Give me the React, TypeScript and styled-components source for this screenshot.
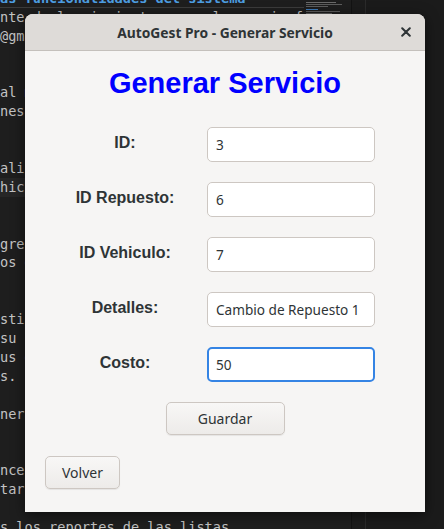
import React from "react";
import styled, { createGlobalStyle } from "styled-components";

const GlobalStyle = createGlobalStyle`
  html, body { margin: 0; padding: 0; background: #1e1e1e; overflow: hidden; }
  * { box-sizing: border-box; }
`;

const Desktop = styled.div`
  position: relative;
  width: 444px;
  height: 529px;
  overflow: hidden;
  display: flex;
  background: #1e1e1e;
`;

const CodePane = styled.div`
  width: 352px;
  display: flex;
  border-right: 1px solid #131313;
`;

const CodeText = styled.div`
  flex: 1;
  overflow: hidden;
  display: flex;
  flex-direction: column;
  margin-top: -11px;
  font-family: "DejaVu Sans Mono", "Liberation Mono", monospace;
  font-size: 13.6px;
  color: #c4c4c4;
`;

const CodeLine = styled.div<{ $heading?: boolean; $current?: boolean; $rule?: boolean }>`
  flex: none;
  height: 18.9px;
  line-height: 18.9px;
  white-space: pre;
  color: ${(p) => (p.$heading ? "#4d9de0" : "#c4c4c4")};
  font-weight: ${(p) => (p.$heading ? "bold" : "normal")};
  background: ${(p) => (p.$current ? "#262626" : "transparent")};
  box-shadow: ${(p) => (p.$rule ? "inset 0 -1px 0 #3c3c3c" : "none")};
`;

const Minimap = styled.div`
  width: 47px;
  padding-top: 1px;
`;

const Scrollbar = styled.div`
  width: 14px;
  border-right: 1px solid #2b2b2b;
  background: #1c1c1c;
`;

const SidePanel = styled.div`
  flex: 1;
  background: #1b1b1b;
`;

const Window = styled.div`
  position: absolute;
  left: 25px;
  top: 14px;
  width: 400px;
  height: 498px;
  display: flex;
  flex-direction: column;
  border-radius: 8px 8px 0 0;
  overflow: hidden;
  background: #f6f5f4;
  box-shadow: 0 3px 14px rgba(0, 0, 0, 0.55);
`;

const TitleBar = styled.div`
  height: 37px;
  flex: none;
  display: grid;
  grid-template-columns: 1fr auto 1fr;
  align-items: center;
  background: #dedbd8;
  border-bottom: 1px solid #c4c0bc;
  padding: 0 7px;
`;

const Title = styled.div`
  grid-column: 2;
  font-family: "Noto Sans", sans-serif;
  font-weight: bold;
  font-size: 13.8px;
  color: #2e3436;
`;

const CloseButton = styled.div`
  grid-column: 3;
  justify-self: end;
  width: 24px;
  height: 24px;
  display: grid;
  place-items: center;
`;

const Body = styled.div`
  flex: 1;
  display: flex;
  flex-direction: column;
  padding-top: 15px;
`;

const Heading = styled.h1`
  margin: 0;
  text-align: center;
  font-family: "Liberation Sans", Arial, sans-serif;
  font-weight: bold;
  font-size: 29px;
  line-height: 34px;
  color: #0000ff;
`;

const Form = styled.div`
  margin-top: 27px;
  padding-left: 25px;
  display: grid;
  grid-template-columns: 150px 168px;
  column-gap: 7px;
  row-gap: 20px;
`;

const Label = styled.div`
  align-self: center;
  text-align: center;
  padding-bottom: 3px;
  font-family: "Liberation Sans", Arial, sans-serif;
  font-weight: bold;
  font-size: 16px;
  color: #2e3436;
`;

const Input = styled.input<{ $focused?: boolean }>`
  height: 35px;
  width: 168px;
  margin: 0;
  border: ${(p) => (p.$focused ? "2px solid #3584e4" : "1px solid #cdc7c2")};
  border-radius: 5px;
  padding: 0 ${(p) => (p.$focused ? "7px" : "8px")};
  background: #ffffff;
  font-family: "Noto Sans", sans-serif;
  font-size: 13.6px;
  color: #2e3436;
  outline: none;
`;

const Button = styled.button<{ $width: number }>`
  width: ${(p) => p.$width}px;
  height: 33px;
  border: 1px solid #cdc7c2;
  border-radius: 5px;
  background: linear-gradient(#f8f7f6, #edebe9);
  box-shadow: 0 1px 1px rgba(0, 0, 0, 0.07);
  font-family: "Noto Sans", sans-serif;
  font-size: 14px;
  color: #2e3436;
  padding: 0;
`;

const SaveRow = styled.div`
  margin-top: 20px;
  display: flex;
  justify-content: center;
`;

const BackRow = styled.div`
  margin-top: 21px;
  padding-left: 20px;
  display: flex;
`;

const lines: { t: string; heading?: boolean; current?: boolean; rule?: boolean }[] = [
  { t: "as funcionalidades del sistema", heading: true, rule: true },
  { t: "nte de lo siguiente para el usuario final" },
  { t: "@gmail.com" },
  { t: "" },
  { t: "" },
  { t: "al manejar las operaciones" },
  { t: "nes." },
  { t: "" },
  { t: "" },
  { t: "alizar los datos" },
  { t: "hiculo registrado", current: true },
  { t: "" },
  { t: "" },
  { t: "gresar los servicios" },
  { t: "os de cada cliente" },
  { t: "" },
  { t: "" },
  { t: "stico del vehiculo" },
  { t: "su informacion" },
  { t: "us datos" },
  { t: "s." },
  { t: "" },
  { t: "nerar un servicio" },
  { t: "" },
  { t: "" },
  { t: "ncelar" },
  { t: "tar" },
  { t: "" },
  { t: "s los reportes de las listas" },
];

const fields: { label: string; value: string; focused?: boolean }[] = [
  { label: "ID:", value: "3" },
  { label: "ID Repuesto:", value: "6" },
  { label: "ID Vehiculo:", value: "7" },
  { label: "Detalles:", value: "Cambio de Repuesto 1" },
  { label: "Costo:", value: "50", focused: true },
];

export default function App() {
  return (
    <>
      <GlobalStyle />
      <Desktop>
        <CodePane>
          <CodeText>
            {lines.map((l, i) => (
              <CodeLine key={i} $heading={l.heading} $current={l.current} $rule={l.rule}>
                {l.t}
              </CodeLine>
            ))}
          </CodeText>
          <Minimap>
            <svg width="47" height="16" viewBox="0 0 47 16">
              <rect x="2" y="1" width="30" height="1" fill="#6a6a6a" />
              <rect x="2" y="3" width="36" height="1" fill="#5d5d5d" />
              <rect x="2" y="5" width="22" height="1" fill="#5d5d5d" />
              <rect x="2" y="8" width="12" height="1" fill="#3c79b8" />
              <rect x="2" y="10" width="34" height="1" fill="#5d5d5d" />
              <rect x="2" y="12" width="26" height="1" fill="#5d5d5d" />
            </svg>
          </Minimap>
        </CodePane>
        <Scrollbar />
        <SidePanel />

        <Window>
          <TitleBar>
            <Title>AutoGest Pro - Generar Servicio</Title>
            <CloseButton>
              <svg width="10" height="10" viewBox="0 0 10 10">
                <path d="M1.2 1.2 L8.8 8.8 M8.8 1.2 L1.2 8.8" stroke="#2e3436" strokeWidth="2" strokeLinecap="round" />
              </svg>
            </CloseButton>
          </TitleBar>
          <Body>
            <Heading>Generar Servicio</Heading>
            <Form>
              {fields.map((f) => (
                <React.Fragment key={f.label}>
                  <Label>{f.label}</Label>
                  <Input readOnly value={f.value} $focused={f.focused} />
                </React.Fragment>
              ))}
            </Form>
            <SaveRow>
              <Button $width={119}>Guardar</Button>
            </SaveRow>
            <BackRow>
              <Button $width={75}>Volver</Button>
            </BackRow>
          </Body>
        </Window>
      </Desktop>
    </>
  );
}
